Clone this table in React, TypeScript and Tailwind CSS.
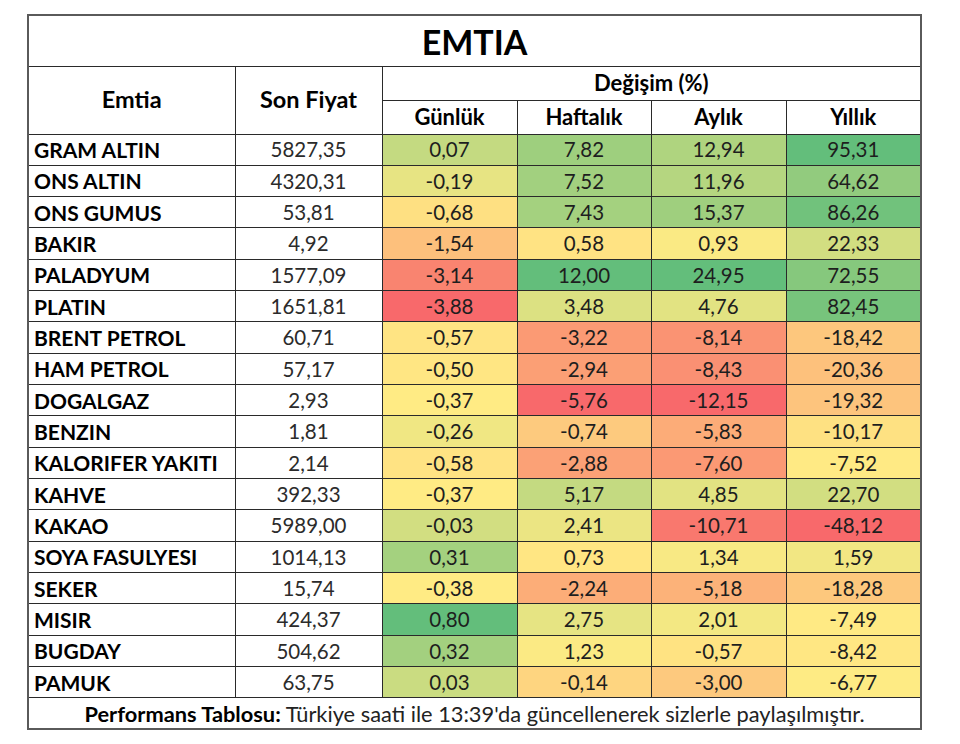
import React from "react";

type Row = {
  name: string;
  price: string;
  changes: number[]; // günlük, haftalık, aylık, yıllık
};

const rows: Row[] = [
  { name: "GRAM ALTIN", price: "5827,35", changes: [0.07, 7.82, 12.94, 95.31] },
  { name: "ONS ALTIN", price: "4320,31", changes: [-0.19, 7.52, 11.96, 64.62] },
  { name: "ONS GUMUS", price: "53,81", changes: [-0.68, 7.43, 15.37, 86.26] },
  { name: "BAKIR", price: "4,92", changes: [-1.54, 0.58, 0.93, 22.33] },
  { name: "PALADYUM", price: "1577,09", changes: [-3.14, 12.0, 24.95, 72.55] },
  { name: "PLATIN", price: "1651,81", changes: [-3.88, 3.48, 4.76, 82.45] },
  { name: "BRENT PETROL", price: "60,71", changes: [-0.57, -3.22, -8.14, -18.42] },
  { name: "HAM PETROL", price: "57,17", changes: [-0.5, -2.94, -8.43, -20.36] },
  { name: "DOGALGAZ", price: "2,93", changes: [-0.37, -5.76, -12.15, -19.32] },
  { name: "BENZIN", price: "1,81", changes: [-0.26, -0.74, -5.83, -10.17] },
  { name: "KALORIFER YAKITI", price: "2,14", changes: [-0.58, -2.88, -7.6, -7.52] },
  { name: "KAHVE", price: "392,33", changes: [-0.37, 5.17, 4.85, 22.7] },
  { name: "KAKAO", price: "5989,00", changes: [-0.03, 2.41, -10.71, -48.12] },
  { name: "SOYA FASULYESI", price: "1014,13", changes: [0.31, 0.73, 1.34, 1.59] },
  { name: "SEKER", price: "15,74", changes: [-0.38, -2.24, -5.18, -18.28] },
  { name: "MISIR", price: "424,37", changes: [0.8, 2.75, 2.01, -7.49] },
  { name: "BUGDAY", price: "504,62", changes: [0.32, 1.23, -0.57, -8.42] },
  { name: "PAMUK", price: "63,75", changes: [0.03, -0.14, -3.0, -6.77] },
];

const RED = [248, 105, 107];
const YELLOW = [255, 235, 132];
const GREEN = [99, 190, 123];

function mix(a: number[], b: number[], t: number) {
  const c = a.map((v, i) => Math.round(v + (b[i] - v) * t));
  return `rgb(${c[0]}, ${c[1]}, ${c[2]})`;
}

// 3-colour scale per column: min red, median yellow, max green
function scaleFor(values: number[]) {
  const sorted = [...values].sort((x, y) => x - y);
  const min = sorted[0];
  const max = sorted[sorted.length - 1];
  const n = sorted.length;
  const mid = n % 2 ? sorted[(n - 1) / 2] : (sorted[n / 2 - 1] + sorted[n / 2]) / 2;
  return (v: number) => {
    if (v <= mid) return mix(RED, YELLOW, mid === min ? 1 : (v - min) / (mid - min));
    return mix(YELLOW, GREEN, max === mid ? 0 : (v - mid) / (max - mid));
  };
}

const scales = [0, 1, 2, 3].map((i) => scaleFor(rows.map((r) => r.changes[i])));

const fmt = (v: number) => v.toFixed(2).replace(".", ",");

export default function App() {
  return (
    <div className="min-h-screen bg-white pl-[27px] pt-[14px] font-['Lato',sans-serif]">
      <table className="w-[893px] table-fixed border-collapse border-2 border-[#5a5a5a] leading-none text-[#141414]">
        <colgroup>
          <col className="w-[207px]" />
          <col className="w-[147px]" />
          <col className="w-[135px]" />
          <col className="w-[134px]" />
          <col className="w-[135px]" />
          <col className="w-[135px]" />
        </colgroup>
        <thead>
          {/* Title */}
          <tr className="h-[51px]">
            <th colSpan={6} className="border border-[#2a2a2a] pt-[3px] text-center align-middle text-[34px] font-bold text-black">
              EMTIA
            </th>
          </tr>
          <tr className="h-[34px]">
            <th rowSpan={2} className="border border-[#2a2a2a] text-center align-middle text-[23.5px] font-bold text-black">
              Emtia
            </th>
            <th rowSpan={2} className="border border-[#2a2a2a] text-center align-middle text-[23.5px] font-bold text-black">
              Son Fiyat
            </th>
            <th colSpan={4} className="border border-[#2a2a2a] text-center align-middle text-[22px] font-bold text-black">
              Değişim (%)
            </th>
          </tr>
          <tr className="h-[34px]">
            {["Günlük", "Haftalık", "Aylık", "Yıllık"].map((h) => (
              <th key={h} className="border border-[#2a2a2a] text-center align-middle text-[22px] font-bold text-black">
                {h}
              </th>
            ))}
          </tr>
        </thead>
        <tbody>
          {rows.map((r) => (
            <tr key={r.name} className="h-[31.33px]">
              <td className="border border-[#2a2a2a] pl-[5px] align-middle text-[21px] font-bold text-black">{r.name}</td>
              <td className="border border-[#2a2a2a] text-center align-middle text-[20.5px] text-[#2b2b2b]">{r.price}</td>
              {r.changes.map((v, i) => (
                <td
                  key={i}
                  className="border border-[#2a2a2a] text-center align-middle text-[20.5px] text-[#1e1e1e]"
                  style={{ backgroundColor: scales[i](v) }}
                >
                  {fmt(v)}
                </td>
              ))}
            </tr>
          ))}
          {/* Footer */}
          <tr className="h-[31px]">
            <td colSpan={6} className="border border-[#2a2a2a] pt-[2px] text-center align-middle text-[21.8px] text-[#222]">
              <span className="font-bold text-black">Performans Tablosu:</span> Türkiye saati ile 13:39'da güncellenerek sizlerle paylaşılmıştır.
            </td>
          </tr>
        </tbody>
      </table>
    </div>
  );
}
